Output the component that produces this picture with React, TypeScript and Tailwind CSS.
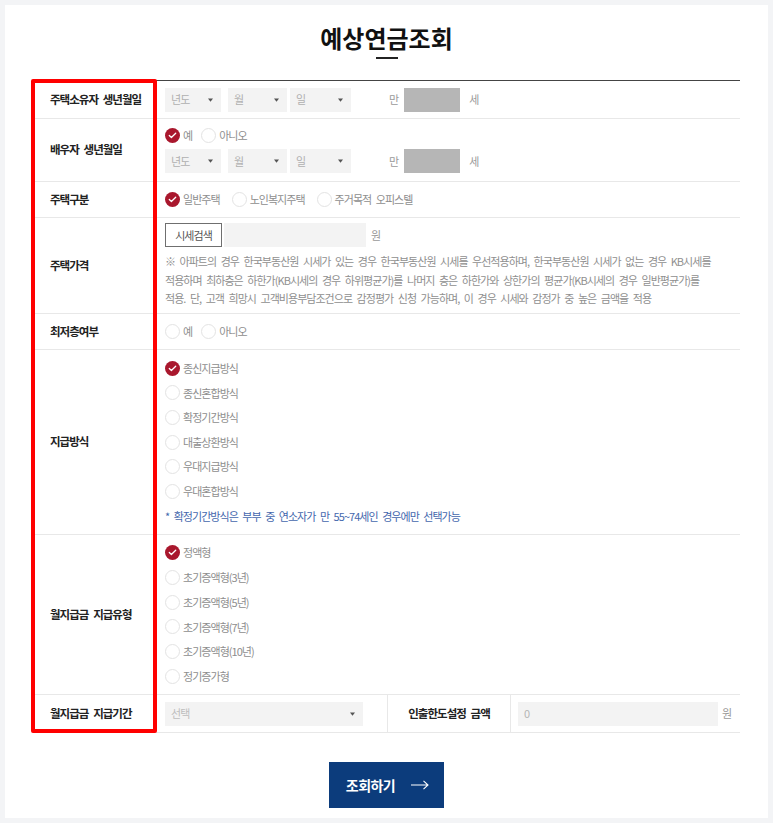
import React from 'react';

const FONT = "font-['Noto_Sans_CJK_KR','Noto_Sans',sans-serif]";

function Caret() {
  return (
    <svg width="5" height="4" viewBox="0 0 5 4" className="shrink-0">
      <path d="M0 0.5h5L2.5 3.8z" fill="#555" />
    </svg>
  );
}

function Select({ label, w }: { label: string; w: string }) {
  return (
    <div className={`${w} h-[24px] bg-[#f3f3f3] flex items-center justify-between pl-[6px] pr-[8px] text-[11px] text-[#b0b0b0]`}>
      <span>{label}</span>
      <Caret />
    </div>
  );
}

function Radio({ label, checked = false }: { label: string; checked?: boolean }) {
  return (
    <div className="flex items-center gap-[3px]">
      {checked ? (
        <span className="w-[15px] h-[15px] rounded-full bg-[#a9172d] flex items-center justify-center">
          <svg width="9" height="7" viewBox="0 0 9 7">
            <path d="M1.3 3.5l2.1 2L7.7 1.3" stroke="#fff" strokeWidth="1.3" fill="none" strokeLinecap="round" strokeLinejoin="round" />
          </svg>
        </span>
      ) : (
        <span className="w-[15px] h-[15px] rounded-full border border-[#e3e3e3] bg-white" />
      )}
      <span className="text-[11px] text-[#8e8e8e]">{label}</span>
    </div>
  );
}

function AgeBox() {
  return (
    <div className="flex items-center text-[11px] text-[#9a9a9a]">
      <span className="ml-[38px] mr-[6px]">만</span>
      <div className="w-[56px] h-[24px] bg-[#b6b6b6]" />
      <span className="ml-[9px]">세</span>
    </div>
  );
}

function DateRow() {
  return (
    <div className="flex items-center">
      <Select label="년도" w="w-[56px]" />
      <div className="ml-[7px]"><Select label="월" w="w-[59px]" /></div>
      <div className="ml-[3px]"><Select label="일" w="w-[61px]" /></div>
      <AgeBox />
    </div>
  );
}

function Row({ label, h, children }: { label: string; h: string; children: React.ReactNode }) {
  return (
    <div className={`flex ${h} border-b border-[#e8e8e8]`}>
      <div className="w-[122px] shrink-0 flex items-center pl-[17px] text-[11.5px] font-bold text-[#222]">{label}</div>
      <div className="flex-1 pl-[10px] flex flex-col justify-center">{children}</div>
    </div>
  );
}

export default function App() {
  const methods = ['종신지급방식', '종신혼합방식', '확정기간방식', '대출상환방식', '우대지급방식', '우대혼합방식'];
  const types = ['정액형', '초기증액형(3년)', '초기증액형(5년)', '초기증액형(7년)', '초기증액형(10년)', '정기증가형'];

  return (
    <div className={`min-h-screen bg-[#f3f4f6] p-[5px] ${FONT} tracking-[-0.06em] [word-spacing:3px]`}>
      <div className="relative bg-white w-[763px] h-[813px]">
        {/* Title */}
        <div className="h-[75px] flex flex-col items-center pt-[18px]">
          <h1 className="text-[24px] leading-[30px] font-bold text-[#111] tracking-normal">예상연금조회</h1>
          <div className="mt-[4px] w-[22px] h-[1.5px] bg-[#222]" />
        </div>

        {/* Table */}
        <div className="ml-[28px] w-[707px] border-t border-[#444]">
          <Row label="주택소유자 생년월일" h="h-[38px]">
            <DateRow />
          </Row>
          <Row label="배우자 생년월일" h="h-[63px]">
            <div className="flex items-center gap-[9px]">
              <Radio label="예" checked />
              <Radio label="아니오" />
            </div>
            <div className="mt-[6px]">
              <DateRow />
            </div>
          </Row>
          <Row label="주택구분" h="h-[36px]">
            <div className="flex items-center gap-[12px]">
              <Radio label="일반주택" checked />
              <Radio label="노인복지주택" />
              <Radio label="주거목적 오피스텔" />
            </div>
          </Row>
          <Row label="주택가격" h="h-[96px]">
            <div className="flex items-center">
              <div className="h-[24px] w-[57px] border border-[#6f6f6f] flex items-center justify-center text-[11px] text-[#555]">시세검색</div>
              <div className="ml-[2px] h-[24px] w-[142px] bg-[#f3f3f3]" />
              <span className="ml-[5px] text-[11px] text-[#9a9a9a]">원</span>
            </div>
            <p className="mt-[5px] text-[11px] leading-[18.5px] text-[#8f8f8f]">
              ※ 아파트의 경우 한국부동산원 시세가 있는 경우 한국부동산원 시세를 우선적용하며, 한국부동산원 시세가 없는 경우 KB시세를
              <br />
              적용하며 최하층은 하한가(KB시세의 경우 하위평균가)를 나머지 층은 하한가와 상한가의 평균가(KB시세의 경우 일반평균가)를
              <br />
              적용. 단, 고객 희망시 고객비용부담조건으로 감정평가 신청 가능하며, 이 경우 시세와 감정가 중 높은 금액을 적용
            </p>
          </Row>
          <Row label="최저층여부" h="h-[36px]">
            <div className="flex items-center gap-[9px]">
              <Radio label="예" />
              <Radio label="아니오" />
            </div>
          </Row>
          <Row label="지급방식" h="h-[185px]">
            {methods.map((m, i) => (
              <div key={m} className="h-[24.6px] flex items-center">
                <Radio label={m} checked={i === 0} />
              </div>
            ))}
            <div className="h-[24.6px] flex items-center text-[11px] text-[#4467ad]">
              * 확정기간방식은 부부 중 연소자가 만 55~74세인 경우에만 선택가능
            </div>
          </Row>
          <Row label="월지급금 지급유형" h="h-[160px]">
            {types.map((t, i) => (
              <div key={t} className="h-[24.8px] flex items-center">
                <Radio label={t} checked={i === 0} />
              </div>
            ))}
          </Row>
          <div className="flex h-[38px] border-b border-[#e8e8e8]">
            <div className="w-[122px] shrink-0 flex items-center pl-[17px] text-[11.5px] font-bold text-[#222]">월지급금 지급기간</div>
            <div className="w-[232px] pl-[10px] flex items-center">
              <div className="w-[198px] h-[24px] bg-[#f3f3f3] flex items-center justify-between pl-[6px] pr-[8px] text-[11px] text-[#bdbdbd]">
                <span>선택</span>
                <Caret />
              </div>
            </div>
            <div className="w-[124px] border-l border-r border-[#e8e8e8] flex items-center justify-center text-[11.5px] font-bold text-[#222]">
              인출한도설정 금액
            </div>
            <div className="flex-1 pl-[7px] flex items-center">
              <div className="w-[200px] h-[24px] bg-[#f3f3f3] flex items-center pl-[6px] text-[11px] text-[#b5b5b5]">0</div>
              <span className="ml-[4px] text-[11px] text-[#9a9a9a]">원</span>
            </div>
          </div>
        </div>

        {/* Button */}
        <div className="mt-[29px] flex justify-center">
          <button className="w-[115px] h-[46px] bg-[#0c3c7c] text-white text-[14px] font-bold tracking-[-0.04em] flex items-center justify-center gap-[16px] pl-[2px]">
            <span>조회하기</span>
            <svg width="18" height="10" viewBox="0 0 18 10">
              <path d="M0 5h17M12.5 0.8L17 5l-4.5 4.2" stroke="#fff" strokeWidth="1.1" fill="none" />
            </svg>
          </button>
        </div>

        {/* Highlight box */}
        <div className="absolute left-[26px] top-[74px] w-[126px] h-[654px] border-[4px] border-[#ff0000] rounded-[2px] pointer-events-none" />
      </div>
    </div>
  );
}
